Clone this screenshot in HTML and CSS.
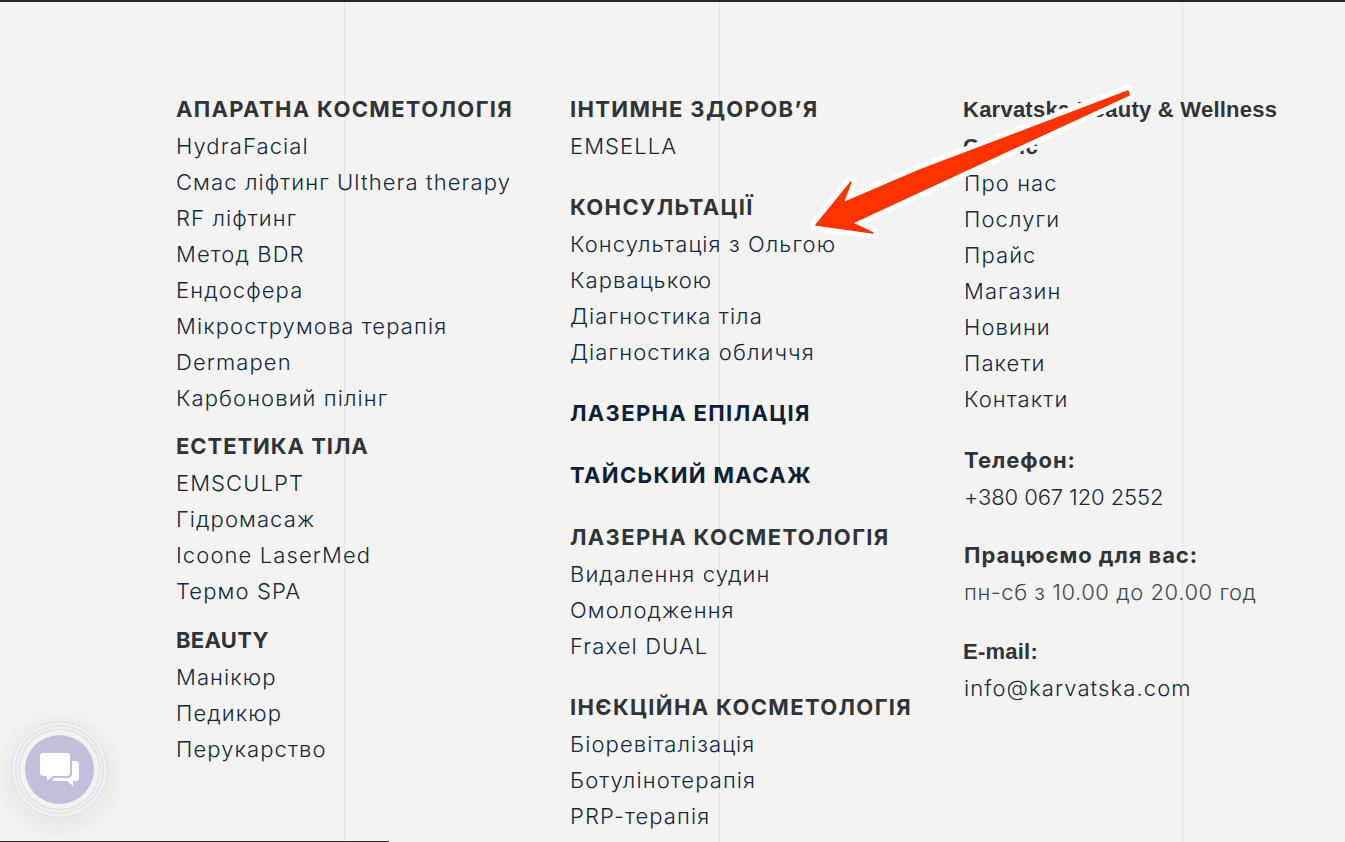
FILE: index.html
```html
<!DOCTYPE html>
<html lang="uk">
<head>
<meta charset="utf-8">
<title>Karvatska Beauty &amp; Wellness</title>
<link rel="stylesheet" href="styles.css">
</head>
<body>
<div class="guides" aria-hidden="true"><i></i><i></i><i></i></div>
<footer class="footer">
  <div class="column services">
    <section class="group">
      <h3 class="title">АПАРАТНА КОСМЕТОЛОГІЯ</h3>
      <a>HydraFacial</a><a>Смас ліфтинг Ulthera therapy</a><a>RF ліфтинг</a><a>Метод BDR</a><a>Ендосфера</a><a>Мікрострумова терапія</a><a>Dermapen</a><a>Карбоновий пілінг</a>
    </section>
    <section class="group">
      <h3 class="title snug">ЕСТЕТИКА ТІЛА</h3>
      <a>EMSCULPT</a><a>Гідромасаж</a><a>Icoone LaserMed</a><a>Термо SPA</a>
    </section>
    <section class="group">
      <h3 class="title tight">BEAUTY</h3>
      <a>Манікюр</a><a>Педикюр</a><a>Перукарство</a>
    </section>
  </div>
  <div class="column treatments">
    <section class="group">
      <h3 class="title">ІНТИМНЕ ЗДОРОВ’Я</h3>
      <a>EMSELLA</a>
    </section>
    <section class="group">
      <h3 class="title">КОНСУЛЬТАЦІЇ</h3>
      <a>Консультація з Ольгою</a><a>Карвацькою</a><a>Діагностика тіла</a><a>Діагностика обличчя</a>
    </section>
    <section class="group"><h3 class="title dark">ЛАЗЕРНА ЕПІЛАЦІЯ</h3></section>
    <section class="group"><h3 class="title dark">ТАЙСЬКИЙ МАСАЖ</h3></section>
    <section class="group">
      <h3 class="title">ЛАЗЕРНА КОСМЕТОЛОГІЯ</h3>
      <a>Видалення судин</a><a>Омолодження</a><a>Fraxel DUAL</a>
    </section>
    <section class="group">
      <h3 class="title">ІНЄКЦІЙНА КОСМЕТОЛОГІЯ</h3>
      <a>Біоревіталізація</a><a>Ботулінотерапія</a><a>PRP-терапія</a>
    </section>
  </div>
  <div class="column contacts">
    <h3 class="brand">Karvatska Beauty &amp; Wellness</h3>
    <section class="nav">
      <h3 class="brand">Сервіс</h3>
      <a>Про нас</a><a>Послуги</a><a>Прайс</a><a>Магазин</a><a>Новини</a><a>Пакети</a><a>Контакти</a>
    </section>
    <section class="phone">
      <h3 class="title snug">Телефон:</h3>
      <a>+380 067 120 2552</a>
    </section>
    <section class="hours">
      <h3 class="title snug">Працюємо для вас:</h3>
      <p class="muted">пн-сб з 10.00 до 20.00 год</p>
    </section>
    <section class="mail">
      <h3 class="brand">E-mail:</h3>
      <a>info@karvatska.com</a>
    </section>
  </div>
</footer>
<div class="chat">
  <span class="chat-disc">
    <svg viewBox="0 0 40 34" width="40" height="34" aria-hidden="true">
      <path fill="#fff" d="M3 0H27a3 3 0 0 1 3 3V20a3 3 0 0 1-3 3H13L7 28V23H3a3 3 0 0 1-3-3V3a3 3 0 0 1 3-3Z"/>
      <path fill="#fff" d="M32 8h4a3 3 0 0 1 3 3v14a3 3 0 0 1-3 3h-3v5l-6-5H15a5 5 0 0 1-3-1l2-2h14a4 4 0 0 0 4-4Z"/>
    </svg>
  </span>
</div>
<svg class="arrow" viewBox="0 0 1345 842" aria-hidden="true">
  <path class="arrow-halo" d="M1128 91 L920 170 L843 203 L851 182 L816 225 L873 233 L852 223 L1129 95 Z"/>
  <path class="arrow-fill" d="M1128 91 L920 170 L843 203 L851 182 L816 225 L873 233 L852 223 L1129 95 Z"/>
</svg>
<div class="edge"></div>
</body>
</html>
```
FILE: styles.css
```css
* { box-sizing: border-box; }
html, body { margin: 0; height: 100%; overflow: hidden; }
body {
  position: relative;
  height: 842px;
  background: #f5f3f2;
  border-top: 2px solid #22262a;
  font-family: Inter, "Liberation Sans", sans-serif;
  color: #0f2942;
}
.guides { position: absolute; inset: 0; }
.guides i { position: absolute; top: 0; bottom: 0; width: 1px; background: #e6e5e3; }
.guides i:nth-child(1) { left: 344px; }
.guides i:nth-child(2) { left: 719px; }
.guides i:nth-child(3) { left: 1182px; }
.footer {
  position: relative;
  display: grid;
  grid-template-columns: 394px 394px 381px;
  padding: 88.5px 0 0 176px;
}
.group { margin-top: 25.1px; }
.services .group { margin-top: 12.5px; }
.column .group:first-child { margin-top: 0; }
.phone { margin-top: 25.5px; }
.hours { margin-top: 21.5px; }
.mail { margin-top: 23.5px; }
.title, .brand { margin: 0; height: 37px; line-height: 37px; font-size: 22px; white-space: nowrap; color: #2f3438; }
.title { font-family: Inter, sans-serif; font-weight: 700; letter-spacing: 1.35px; }
.title.snug { letter-spacing: 0.95px; }
.title.tight { letter-spacing: 0.3px; }
.title.dark { color: #0c2136; letter-spacing: 1.35px; }
.brand { font-family: "Liberation Sans", sans-serif; font-weight: 700; letter-spacing: 0.24px; margin-left: -1px; }
a, .muted {
  display: block;
  margin: 0;
  height: 36px;
  line-height: 36px;
  font-size: 22px;
  font-weight: 350;
  letter-spacing: 1.1px;
  white-space: nowrap;
}
.phone a { letter-spacing: -0.1px; }
.muted { color: #3c4a58; letter-spacing: 0.55px; }
.chat {
  position: absolute;
  left: 11px;
  top: 719px;
  width: 97px;
  height: 97px;
  display: grid;
  place-items: center;
  border-radius: 50%;
  border: 1px solid #e0dde9;
  box-shadow: inset 0 0 0 3px #f3f1f1, inset 0 0 0 4px #e0dde9, inset 0 0 0 7px #f0eeef, inset 0 0 0 8px #e0dde9, 0 6px 30px rgba(0,0,0,.07);
}
.chat-disc {
  width: 69px;
  height: 69px;
  border-radius: 50%;
  background: #c2bedb;
  display: grid;
  place-items: center;
}
.arrow { position: absolute; left: 0; top: -2px; width: 1345px; height: 842px; pointer-events: none; }
.arrow-halo { fill: #fff; stroke: #fff; stroke-width: 12; stroke-linejoin: round; }
.arrow-fill { fill: #ff3300; stroke: #ff3300; stroke-width: 1.5; stroke-linejoin: round; }
.edge { position: absolute; left: 0; bottom: 0; width: 389px; height: 1px; background: #2b2b2b; }
```
